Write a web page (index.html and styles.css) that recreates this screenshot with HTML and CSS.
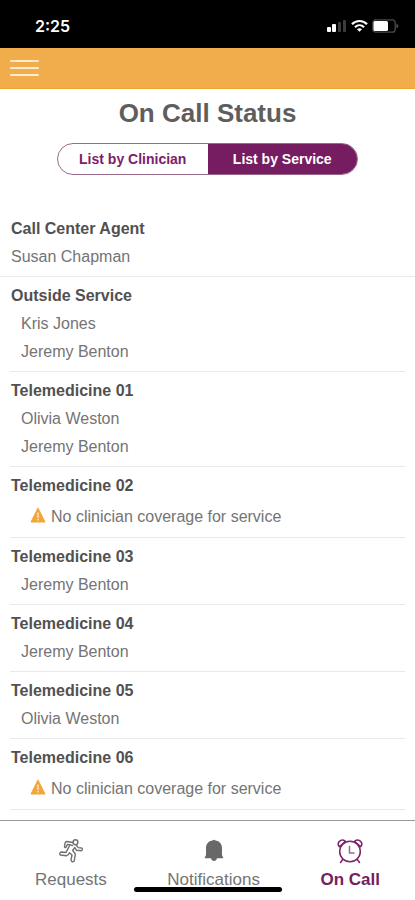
FILE: index.html
```html
<!DOCTYPE html>
<html lang="en">
<head>
<meta charset="utf-8">
<meta name="viewport" content="width=device-width, initial-scale=1">
<title>On Call Status</title>
<link rel="stylesheet" href="styles.css">
</head>
<body>
<div class="app">
  <div class="status-bar">
    <span class="time">2:25</span>
    <span class="indicators">
      <svg width="20" height="14" viewBox="0 0 20 14" aria-hidden="true">
        <rect x="0" y="8" width="4" height="5" rx="1" fill="#fff"/>
        <rect x="5" y="5" width="4" height="8" rx="1" fill="#fff"/>
        <rect x="11" y="3" width="3" height="10" rx="1" fill="#3c3c3c"/>
        <rect x="16" y="1" width="3" height="12" rx="1" fill="#3c3c3c"/>
      </svg>
      <svg width="17" height="14" viewBox="0 0 17 14" fill="none" stroke="#fff" stroke-width="2.2" aria-hidden="true">
        <path d="M1 5.2C5 .9 12 .9 16 5.2"/>
        <path d="M4 8.2c2.600-2.600 6.400-2.600 9 0"/>
        <path d="M8.500 12.800 6 10.300c1.400-1.300 3.600-1.300 5 0z" fill="#fff" stroke="none"/>
      </svg>
      <svg width="27" height="14" viewBox="0 0 27 14" aria-hidden="true">
        <rect x=".8" y=".8" width="22.400" height="12.400" rx="3" fill="none" stroke="#4a4a4a" stroke-width="1.300"/>
        <rect x="1.500" y="2" width="14.500" height="10" rx="1.500" fill="#fff"/>
        <path d="M24.500 4.800c2.300.8 2.300 3.600 0 4.400z" fill="#5a5a5a"/>
      </svg>
    </span>
  </div>
  <header class="nav-bar">
    <button class="menu" type="button" aria-label="Menu"><span></span><span></span><span></span></button>
  </header>
  <main class="content">
    <h1>On Call Status</h1>
    <div class="toggle">
      <button type="button">List by Clinician</button>
      <button type="button" class="selected" aria-pressed="true">List by Service</button>
    </div>
    <section class="service service-wide">
      <h2>Call Center Agent</h2>
      <p>Susan Chapman</p>
    </section>
    <section class="service">
      <h2>Outside Service</h2>
      <p>Kris Jones</p>
      <p>Jeremy Benton</p>
    </section>
    <section class="service">
      <h2>Telemedicine 01</h2>
      <p>Olivia Weston</p>
      <p>Jeremy Benton</p>
    </section>
    <section class="service">
      <h2>Telemedicine 02</h2>
      <p class="alert"><svg width="16" height="16" viewBox="0 0 16 16" aria-hidden="true"><path d="M8 1 15 15H1z" fill="#f0a63a" stroke="#f0a63a" stroke-linejoin="round"/><path d="M8 5.500v5.500M8 12v1.500" stroke="#fdf0d8" stroke-width="1.300"/></svg>No clinician coverage for service</p>
    </section>
    <section class="service">
      <h2>Telemedicine 03</h2>
      <p>Jeremy Benton</p>
    </section>
    <section class="service">
      <h2>Telemedicine 04</h2>
      <p>Jeremy Benton</p>
    </section>
    <section class="service">
      <h2>Telemedicine 05</h2>
      <p>Olivia Weston</p>
    </section>
    <section class="service">
      <h2>Telemedicine 06</h2>
      <p class="alert"><svg width="16" height="16" viewBox="0 0 16 16" aria-hidden="true"><path d="M8 1 15 15H1z" fill="#f0a63a" stroke="#f0a63a" stroke-linejoin="round"/><path d="M8 5.500v5.500M8 12v1.500" stroke="#fdf0d8" stroke-width="1.300"/></svg>No clinician coverage for service</p>
    </section>
  </main>
  <nav class="tabs">
    <a href="#requests">
      <svg width="26" height="26" viewBox="0 0 26 26" fill="none" stroke="#707070" stroke-width="1.400" stroke-linejoin="round" stroke-linecap="round" aria-hidden="true">
        <circle cx="17.500" cy="4.200" r="2.400"/>
        <path d="M15 4.500 9 3.500Q7.700 3.500 7.200 4.600L6.500 8.200Q6.500 10 8 9.300L9.500 6.400 12 6.800 9.500 11.600Q8.600 13.300 8 14.500L3 14Q.8 15.200 2.300 17L8.500 17.800Q10.300 17.300 11.500 14.800L14 17 13 22Q14 25 16.200 23L17.300 16.500Q17.300 15.300 14.600 12.500L16.800 9.500 18.500 12.300 23.500 12.700Q25.300 11.200 23.700 10L20.300 9.600 18 6.800M12 6.800 14.500 7.500"/>
      </svg>
      <span>Requests</span>
    </a>
    <a href="#notifications">
      <svg width="26" height="26" viewBox="0 0 26 26" fill="#686868" aria-hidden="true">
        <path d="M11.600 2.500q1.400-1.500 2.800 0C18.500 3 21 6 21 10V16c0 1.500.3 2.300 1.200 3.200V20.200H3.800V19.200C4.700 18.300 5 17.500 5 16V10C5 6 7.500 3 11.600 2.500zM10 20h6c-.3 4-5.700 4-6 0z"/>
      </svg>
      <span>Notifications</span>
    </a>
    <a href="#on-call" class="current" aria-current="page">
      <svg width="26" height="26" viewBox="0 0 26 26" fill="none" stroke="#7c2466" stroke-width="1.500" stroke-linecap="round" stroke-linejoin="round" aria-hidden="true">
        <circle cx="13" cy="13.500" r="10.300"/>
        <path d="M2.300 8.800C-.8 5 3.700-.1 8.500 3.300M2.300 8.800 8.500 3.300M23.700 8.800C26.800 5 22.300-.1 17.500 3.300M23.700 8.800 17.500 3.300M5.700 21.500 3.500 24.500M20.300 21.500 22.500 24.500"/>
        <path d="M12.500 8.500v6.500H17" stroke="#9c6a90"/>
      </svg>
      <span>On Call</span>
    </a>
    <div class="home-indicator"></div>
  </nav>
</div>
</body>
</html>
```
FILE: styles.css
```css
* {
  box-sizing: border-box;
}

body {
  margin: 0;
  background: #fff;
  color: #747474;
  font-family: "Liberation Sans", Arial, sans-serif;
  font-size: 16px;
}

h1, h2, p {
  margin: 0;
}

button {
  margin: 0;
  padding: 0;
  border: 0;
  background: none;
  font: inherit;
}

.app {
  display: flex;
  flex-direction: column;
  min-height: 100vh;
}

.status-bar {
  display: flex;
  align-items: center;
  justify-content: space-between;
  height: 48px;
  padding: 3px 16px 0 35px;
  background: #000;
  color: #fff;
}

.time {
  font: 600 16px/20px Inter, sans-serif;
}

.indicators {
  display: flex;
  align-items: center;
  gap: 4px;
}

.nav-bar {
  display: flex;
  align-items: center;
  height: 41px;
  padding: 0 10px;
  background: #f1ad4b;
  border-bottom: 1px solid #eea62e;
}

.menu {
  display: flex;
  flex-direction: column;
  gap: 5px;
  width: 29px;
}

.menu span {
  height: 2px;
  border-radius: 1px;
  background: #fdebcb;
}

.content {
  flex: 1;
}

h1 {
  padding-top: 8px;
  color: #5e5e5e;
  font-size: 26px;
  line-height: 32px;
  text-align: center;
}

.toggle {
  display: flex;
  width: 301px;
  height: 32px;
  margin: 14px auto 35px;
  overflow: hidden;
  border: 1px solid #9a6a8d;
  border-radius: 16px;
}

.toggle button {
  flex: 1;
  color: #7c2169;
  font-size: 14px;
  font-weight: bold;
}

.toggle .selected {
  background: #761c60;
  color: #fff;
}

.service {
  margin: 0 10px;
  padding: 5px 0;
  border-bottom: 1px solid #e9e9e9;
  line-height: 28px;
}

.service h2 {
  padding-left: 1px;
  color: #515151;
  font-size: 16px;
}

.service p {
  padding-left: 11px;
}

.service-wide {
  margin: 0;
  padding: 5px 10px;
}

.service-wide p {
  padding-left: 1px;
}

.service .alert {
  display: flex;
  align-items: center;
  gap: 5px;
  padding: 3px 0 1px 20px;
}

.alert svg {
  margin-bottom: 4px;
}

.tabs {
  position: relative;
  display: flex;
  justify-content: space-between;
  height: 80px;
  padding: 17px 35px 0;
  border-top: 1px solid #999;
  background: #fff;
  font-size: 17px;
  line-height: 20px;
}

.tabs a {
  display: flex;
  flex-direction: column;
  align-items: center;
  gap: 6px;
  color: #747474;
  text-decoration: none;
}

.tabs .current {
  color: #74205f;
  font-weight: bold;
}

.home-indicator {
  position: absolute;
  bottom: 8px;
  left: 50%;
  width: 148px;
  height: 5px;
  border-radius: 3px;
  background: #000;
  transform: translateX(-50%);
}
```
